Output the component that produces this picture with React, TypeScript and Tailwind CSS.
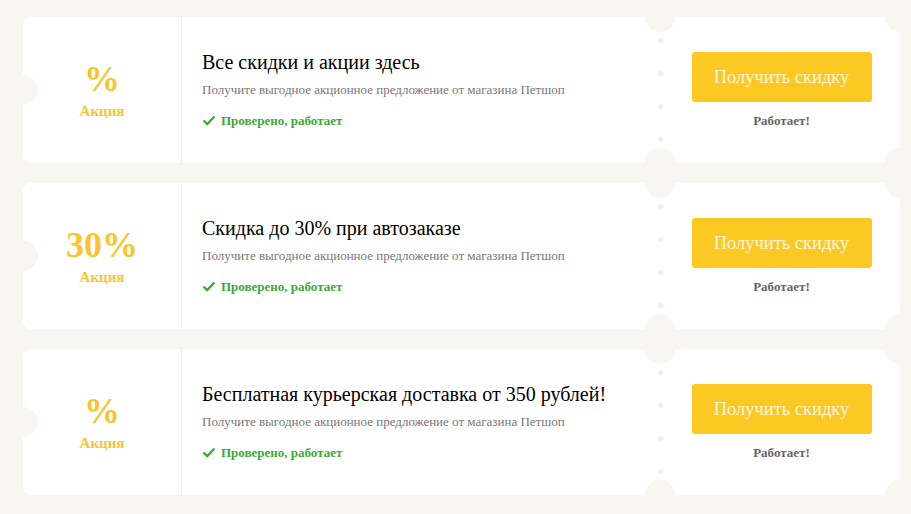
import React from "react";

const offers = [
  { value: "%", title: "Все скидки и акции здесь" },
  { value: "30%", title: "Скидка до 30% при автозаказе" },
  { value: "%", title: "Бесплатная курьерская доставка от 350 рублей!" },
];

function Check() {
  return (
    <svg width="14" height="11" viewBox="0 0 14 11" className="mr-[5px]">
      <path d="M1.5 5.5 L5.2 9 L12.5 1.5" fill="none" stroke="#3aaa35" strokeWidth="2.4" />
    </svg>
  );
}

function Coupon({ value, title }: { value: string; title: string }) {
  return (
    <div className="relative flex h-[146px] w-[877px] overflow-hidden rounded-[8px] bg-white">
      {/* notches */}
      <span className="absolute left-[-15px] top-[58px] h-[30px] w-[30px] rounded-full bg-[#f7f6f1]" />
      <span className="absolute left-[622px] top-[-15px] h-[30px] w-[30px] rounded-full bg-[#f7f6f1]" />
      <span className="absolute left-[622px] bottom-[-15px] h-[30px] w-[30px] rounded-full bg-[#f7f6f1]" />
      <span className="absolute right-[-15px] top-[-15px] h-[30px] w-[30px] rounded-full bg-[#f7f6f1]" />
      <span className="absolute right-[-15px] bottom-[-15px] h-[30px] w-[30px] rounded-full bg-[#f7f6f1]" />

      <div className="flex w-[159px] shrink-0 flex-col items-center justify-center border-r border-[#efefef] text-[#f9c52f]">
        <div className="text-[36px] font-bold leading-[36px]">{value}</div>
        <div className="mt-[6px] text-[15px] font-bold leading-[16px]">Акция</div>
      </div>

      <div className="flex flex-1 flex-col pl-[20px] pt-[33px]">
        <div className="text-[20px] leading-[24px] text-black">{title}</div>
        <div className="mt-[8px] text-[13px] leading-[15px] text-[#777]">
          Получите выгодное акционное предложение от магазина Петшоп
        </div>
        <div className="mt-[16px] flex items-center text-[13px] font-bold leading-[15px] text-[#3aaa35]">
          <Check />
          Проверено, работает
        </div>
      </div>

      <div className="flex w-[6px] shrink-0 flex-col items-center gap-[28px] pt-[21px]">
        <span className="h-[5px] w-[5px] rounded-full bg-[#efeee9]" />
        <span className="h-[5px] w-[5px] rounded-full bg-[#efeee9]" />
        <span className="h-[5px] w-[5px] rounded-full bg-[#efeee9]" />
        <span className="h-[5px] w-[5px] rounded-full bg-[#efeee9]" />
      </div>

      <div className="flex w-[237px] shrink-0 flex-col items-center pt-[35px]">
        <button className="h-[50px] w-[180px] rounded-[3px] bg-[#fcc822] pt-[2px] text-[18.5px] text-[#fdf6dd]">
          Получить скидку
        </button>
        <div className="mt-[10px] text-[13px] font-bold leading-[17px] text-[#666]">Работает!</div>
      </div>
    </div>
  );
}

export default function App() {
  return (
    <div className="min-h-[514px] w-[911px] bg-[#f7f6f1] pl-[23px] pt-[17px] font-[Liberation_Serif]">
      <div className="flex flex-col gap-[20px]">
        {offers.map((o, i) => (
          <Coupon key={i} value={o.value} title={o.title} />
        ))}
      </div>
    </div>
  );
}
